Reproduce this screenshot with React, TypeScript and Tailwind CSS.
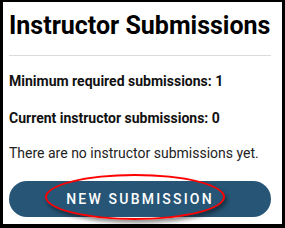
export default function App() {
  return (
    <div
      className="w-[285px] h-[228px] bg-white border-black border-t-2 border-l-[3px] border-r-[3px] border-b-4 overflow-hidden"
      style={{ fontFamily: 'Roboto, "Liberation Sans", sans-serif' }}
    >
      <div className="pl-[6px] pr-[11px] pt-[9px]">
        {/* 제목 */}
        <h1 className="text-[25px] leading-[30px] font-bold text-black">
          Instructor Submissions
        </h1>
        <hr className="mt-[14px] border-t border-[#dcdcdc]" />

        {/* 내용 */}
        <p className="mt-[16px] text-[14px] leading-[18px] font-bold text-[#111]">
          Minimum required submissions: 1
        </p>
        <p className="mt-[19px] text-[14px] leading-[18px] font-bold text-[#111]">
          Current instructor submissions: 0
        </p>
        <p className="mt-[17px] text-[14px] leading-[18px] text-[#222]">
          There are no instructor submissions yet.
        </p>

        {/* 버튼 */}
        <div className="relative mt-[19px]">
          <button className="w-full h-[36px] rounded-full bg-[#275576] text-white text-[14px] font-medium tracking-[2.2px]">
            NEW SUBMISSION
          </button>
          <div className="absolute left-[36px] top-[-7px] w-[180px] h-[46px] rounded-[50%] border-[2.5px] border-[#ff0000] shadow-[2px_3px_4px_rgba(0,0,0,0.45)] pointer-events-none" />
        </div>
      </div>
    </div>
  );
}
